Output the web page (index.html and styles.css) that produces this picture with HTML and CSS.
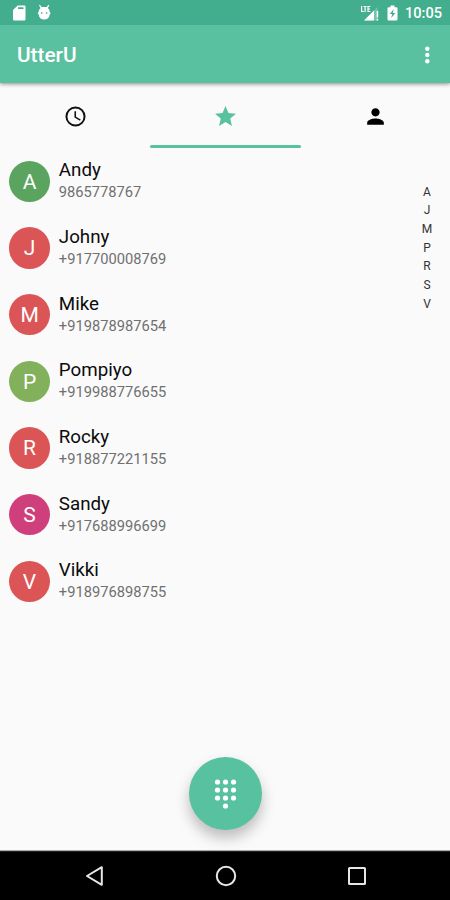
FILE: index.html
```
<!DOCTYPE html>
<html lang="en">
<head>
<meta charset="utf-8">
<title>UtterU</title>
<link rel="stylesheet" href="styles.css">
</head>
<body>
<div class="phone">
  <header class="header">
    <div class="status">
      <svg class="status-left" width="40" height="25" viewBox="0 0 40 25" fill="#fff">
        <path fill-rule="evenodd" d="M5.700 5.500h6.600q1.200 0 1.200 1.200v12.600q0 1.200-1.200 1.200H2.200Q1 20.500 1 19.300V10zM6 7.300v1.800h5.500V7.300z"/>
        <path fill-rule="evenodd" d="M27.800 4.800l1.900 2.300h5L36.500 4.800l.8.700-1.500 2.400c1.400 1.200 2 2.600 2 4.300l1 1.300-1 .8c-.3 3.500-2.500 5.300-5.600 5.300s-5.300-1.800-5.600-5.300l-1-.8 1-1.300c0-1.700.5-3.100 2-4.300L27 5.500zM29 12.300v1.400h1.400v-1.400zm4.900 0v1.400h1.400v-1.400z"/>
      </svg>
      <div class="status-right">
        <svg width="20" height="25" viewBox="0 0 20 25" fill="#fff">
          <path d="M1 6h1.200v5h1.600v1H1zM3.500 6h3.200v1H5.700v5H4.500V7h-1zM7.400 6h3v1H8.600v1.500h1.500v1H8.600V11h1.800v1h-3z"/>
          <path d="M17.500 7v13.500H4z" opacity=".28"/>
          <path d="M14 10.500v10H4zM16.700 11h1.500v6.500h-1.500zm0 7.700h1.500v1.800h-1.500z"/>
        </svg>
        <svg class="battery" width="11" height="25" viewBox="0 0 11 25">
          <path fill="#fff" fill-rule="evenodd" d="M3.500 5.500h4v1.700h1.700q1.300 0 1.300 1.300v10.700q0 1.300-1.300 1.300H1.800Q.5 20.500.5 19.200V8.500q0-1.300 1.300-1.300h1.700zM6.800 9L2.700 14h2.500l-1 4 4.200-5H5.800z"/>
        </svg>
        <span class="time">10:05</span>
      </div>
    </div>
    <div class="toolbar">
      <h1 class="title">UtterU</h1>
      <svg class="more" width="6" height="18" viewBox="0 0 6 18" fill="#fff"><circle cx="3.300" cy="2.700" r="2.200"/><circle cx="3.300" cy="9" r="2.200"/><circle cx="3.300" cy="15.300" r="2.200"/></svg>
    </div>
  </header>
  <nav class="tabs">
    <div class="tab"><svg width="25" height="25" viewBox="0 0 24 24"><circle cx="12" cy="12" r="8.700" fill="none" stroke="#111" stroke-width="1.900"/><path fill="#111" d="M12.500 7H11v6l5.250 3.150.75-1.230-4.500-2.670z"/></svg></div>
    <div class="tab active"><svg width="25" height="25" viewBox="0 0 24 24"><path fill="#57c1a0" d="M12 17.270L18.180 21l-1.640-7.030L22 9.240l-7.190-.61L12 2 9.190 8.630 2 9.240l5.460 4.730L5.820 21z"/></svg></div>
    <div class="tab"><svg width="25" height="25" viewBox="0 0 24 24"><path d="M12 12c2.210 0 4-1.790 4-4s-1.790-4-4-4-4 1.790-4 4 1.790 4 4 4zm0 2c-2.670 0-8 1.340-8 4v2h16v-2c0-2.660-5.330-4-8-4z"/></svg></div>
  </nav>
  <main class="content">
    <ul class="contacts">
      <li class="contact"><span class="avatar green">A</span><div><div class="name">Andy</div><div class="number">9865778767</div></div></li>
      <li class="contact"><span class="avatar red">J</span><div><div class="name">Johny</div><div class="number">+917700008769</div></div></li>
      <li class="contact"><span class="avatar red">M</span><div><div class="name">Mike</div><div class="number">+919878987654</div></div></li>
      <li class="contact"><span class="avatar lime">P</span><div><div class="name">Pompiyo</div><div class="number">+919988776655</div></div></li>
      <li class="contact"><span class="avatar red">R</span><div><div class="name">Rocky</div><div class="number">+918877221155</div></div></li>
      <li class="contact"><span class="avatar pink">S</span><div><div class="name">Sandy</div><div class="number">+917688996699</div></div></li>
      <li class="contact"><span class="avatar red">V</span><div><div class="name">Vikki</div><div class="number">+918976898755</div></div></li>
    </ul>
    <div class="index"><span>A</span><span>J</span><span>M</span><span>P</span><span>R</span><span>S</span><span>V</span></div>
  </main>
  <div class="dial">
    <svg width="25" height="32" viewBox="0 0 25 32" fill="#fff">
      <circle cx="4.500" cy="4" r="2.600"/><circle cx="12.500" cy="4" r="2.600"/><circle cx="20.500" cy="4" r="2.600"/>
      <circle cx="4.500" cy="12" r="2.600"/><circle cx="12.500" cy="12" r="2.600"/><circle cx="20.500" cy="12" r="2.600"/>
      <circle cx="4.500" cy="20" r="2.600"/><circle cx="12.500" cy="20" r="2.600"/><circle cx="20.500" cy="20" r="2.600"/>
      <circle cx="12.500" cy="28" r="2.600"/>
    </svg>
  </div>
  <footer class="navbar">
    <svg width="22" height="24" viewBox="0 0 22 24"><path d="M18.800 3.200v17.600L4 12z"/></svg>
    <svg width="22" height="24" viewBox="0 0 22 24"><circle cx="11" cy="12" r="9.200"/></svg>
    <svg width="22" height="24" viewBox="0 0 22 24"><rect x="3" y="4" width="16" height="16" rx=".6"/></svg>
  </footer>
</div>
</body>
</html>
```
FILE: styles.css
```
* { box-sizing: border-box; }
body { margin: 0; font-family: Roboto, sans-serif; background: #fafafa; }
.phone {
  position: relative;
  width: 450px;
  height: 900px;
  display: flex;
  flex-direction: column;
  overflow: hidden;
  background: #fafafa;
}
.header { height: 83px; background: #5ac1a0; box-shadow: 0 1px 4px rgba(0, 0, 0, .45); }
.status {
  height: 25px;
  display: flex;
  justify-content: space-between;
  background: #43ae8e;
  padding: 0 7px 0 12px;
}
.status-right { display: flex; align-items: center; }
.battery { margin: 0 7px 0 7px; }
.time { color: #fff; font-size: 14.6px; font-weight: 500; line-height: 25px; padding-top: 2px; width: 38px; }
.toolbar {
  height: 58px;
  display: flex;
  align-items: center;
  justify-content: space-between;
  padding: 2px 20px 0 17px;
}
.title { margin: 0; color: #fff; font-size: 20.8px; font-weight: 500; line-height: 24px; }
.tabs { height: 65px; display: flex; }
.tab {
  width: 150px;
  height: 65px;
  display: flex;
  justify-content: center;
  padding-top: 21px;
}
.tab.active { position: relative; }
.tab.active::after {
  content: "";
  position: absolute;
  left: 0;
  bottom: 0;
  width: 150.5px;
  height: 3px;
  border-radius: 2px;
  background: #57c1a0;
}
.content { flex: 1; display: flex; justify-content: space-between; }
.contacts { list-style: none; margin: 0; padding: 0 0 0 8.8px; }
.contact { height: 66.67px; display: flex; align-items: center; gap: 8.5px; }
.avatar {
  width: 41.5px;
  height: 41.5px;
  border-radius: 50%;
  color: #fff;
  font-size: 21px;
  line-height: 42px;
  text-align: center;
}
.green { background: #5aa45f; }
.red { background: #db5556; }
.lime { background: #83b15b; }
.pink { background: #cf3f7c; }
.name { font-size: 18.75px; line-height: 22px; color: #0c0c0c; }
.number { font-size: 14.7px; line-height: 22px; color: #707070; }
.index {
  width: 20px;
  margin-right: 13px;
  padding-top: 34.5px;
  display: flex;
  flex-direction: column;
  align-items: center;
}
.index span { height: 18.7px; font-size: 12px; line-height: 18.7px; color: #333; }
.dial {
  position: absolute;
  left: 189px;
  top: 757px;
  width: 73px;
  height: 73px;
  border-radius: 50%;
  background: #57c1a0;
  box-shadow: 0 8px 14px rgba(0, 0, 0, .25);
  display: flex;
  align-items: center;
  justify-content: center;
}
.navbar {
  position: relative;
  height: 49px;
  background: #000;
  border-top: 1px solid #222;
  box-shadow: 0 -1px 0 #aaa;
  display: flex;
  align-items: center;
  justify-content: space-between;
  padding: 0 82px 0 83px;
}
.navbar svg { fill: none; stroke: #e6e6e6; stroke-width: 2; stroke-linejoin: round; }
```
